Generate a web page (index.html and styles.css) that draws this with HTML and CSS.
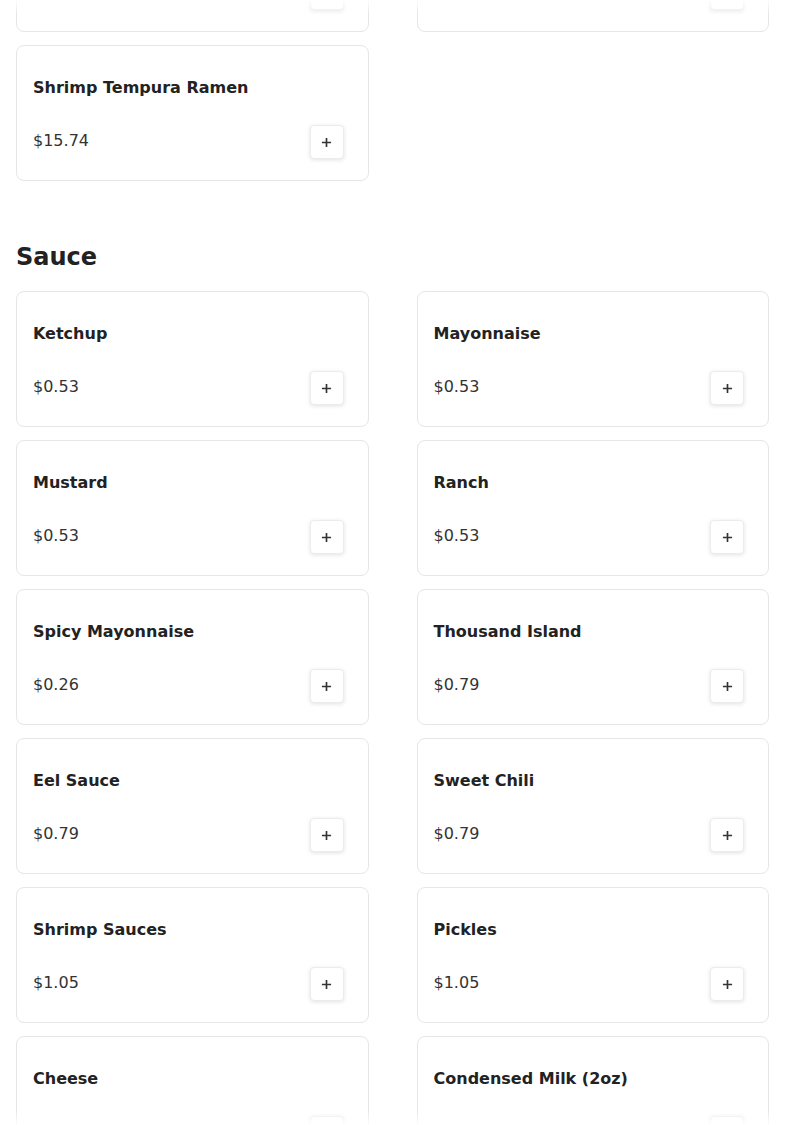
FILE: index.html
```html
<!DOCTYPE html>
<html>
<head>
<meta charset="utf-8">
<link rel="stylesheet" href="styles.css">
</head>
<body>
<main class="menu">
  <section class="section first">
    <div class="grid">
      <div class="card"><h3 class="name">Tonkotsu Ramen</h3><div class="row"><span class="price">$14.99</span><button class="add" aria-label="add"><svg viewBox="0 0 12 12"><path d="M6 1v10M1 6h10"/></svg></button></div></div>
      <div class="card"><h3 class="name">Miso Ramen</h3><div class="row"><span class="price">$13.99</span><button class="add" aria-label="add"><svg viewBox="0 0 12 12"><path d="M6 1v10M1 6h10"/></svg></button></div></div>
      <div class="card"><h3 class="name">Shrimp Tempura Ramen</h3><div class="row"><span class="price">$15.74</span><button class="add" aria-label="add"><svg viewBox="0 0 12 12"><path d="M6 1v10M1 6h10"/></svg></button></div></div>
    </div>
  </section>
  <section class="section">
    <h2 class="title">Sauce</h2>
    <div class="grid">
      <div class="card"><h3 class="name">Ketchup</h3><div class="row"><span class="price">$0.53</span><button class="add" aria-label="add"><svg viewBox="0 0 12 12"><path d="M6 1v10M1 6h10"/></svg></button></div></div>
      <div class="card"><h3 class="name">Mayonnaise</h3><div class="row"><span class="price">$0.53</span><button class="add" aria-label="add"><svg viewBox="0 0 12 12"><path d="M6 1v10M1 6h10"/></svg></button></div></div>
      <div class="card"><h3 class="name">Mustard</h3><div class="row"><span class="price">$0.53</span><button class="add" aria-label="add"><svg viewBox="0 0 12 12"><path d="M6 1v10M1 6h10"/></svg></button></div></div>
      <div class="card"><h3 class="name">Ranch</h3><div class="row"><span class="price">$0.53</span><button class="add" aria-label="add"><svg viewBox="0 0 12 12"><path d="M6 1v10M1 6h10"/></svg></button></div></div>
      <div class="card"><h3 class="name">Spicy Mayonnaise</h3><div class="row"><span class="price">$0.26</span><button class="add" aria-label="add"><svg viewBox="0 0 12 12"><path d="M6 1v10M1 6h10"/></svg></button></div></div>
      <div class="card"><h3 class="name">Thousand Island</h3><div class="row"><span class="price">$0.79</span><button class="add" aria-label="add"><svg viewBox="0 0 12 12"><path d="M6 1v10M1 6h10"/></svg></button></div></div>
      <div class="card"><h3 class="name">Eel Sauce</h3><div class="row"><span class="price">$0.79</span><button class="add" aria-label="add"><svg viewBox="0 0 12 12"><path d="M6 1v10M1 6h10"/></svg></button></div></div>
      <div class="card"><h3 class="name">Sweet Chili</h3><div class="row"><span class="price">$0.79</span><button class="add" aria-label="add"><svg viewBox="0 0 12 12"><path d="M6 1v10M1 6h10"/></svg></button></div></div>
      <div class="card"><h3 class="name">Shrimp Sauces</h3><div class="row"><span class="price">$1.05</span><button class="add" aria-label="add"><svg viewBox="0 0 12 12"><path d="M6 1v10M1 6h10"/></svg></button></div></div>
      <div class="card"><h3 class="name">Pickles</h3><div class="row"><span class="price">$1.05</span><button class="add" aria-label="add"><svg viewBox="0 0 12 12"><path d="M6 1v10M1 6h10"/></svg></button></div></div>
      <div class="card"><h3 class="name">Cheese</h3><div class="row"><span class="price">$1.05</span><button class="add" aria-label="add"><svg viewBox="0 0 12 12"><path d="M6 1v10M1 6h10"/></svg></button></div></div>
      <div class="card"><h3 class="name">Condensed Milk (2oz)</h3><div class="row"><span class="price">$1.05</span><button class="add" aria-label="add"><svg viewBox="0 0 12 12"><path d="M6 1v10M1 6h10"/></svg></button></div></div>
    </div>
  </section>
</main>
<div class="fade fade-top"></div>
<div class="fade fade-bottom"></div>
</body>
</html>
```
FILE: styles.css
```css
html, body {
  margin: 0;
  padding: 0;
  background: #ffffff;
  font-family: "DejaVu Sans", "Liberation Sans", sans-serif;
  color: #222222;
  overflow: hidden;
}
.menu {
  padding: 0 16px;
}
.section.first {
  margin-top: -104px;
}
.section + .section {
  margin-top: 60px;
}
.title {
  margin: 0 0 18px 0;
  font-size: 24px;
  line-height: 32px;
  font-weight: 700;
  color: #222222;
}
.grid {
  display: grid;
  grid-template-columns: 1fr 1fr;
  column-gap: 48px;
  row-gap: 13px;
}
.card {
  box-sizing: border-box;
  height: 136px;
  border: 1px solid #e6e6e6;
  border-radius: 8px;
  padding: 30px 24px 0 16px;
  background: #ffffff;
}
.name {
  margin: 0;
  font-size: 16px;
  line-height: 24px;
  font-weight: 700;
  color: #222222;
}
.row {
  margin-top: 25px;
  display: flex;
  align-items: center;
  justify-content: space-between;
  height: 34px;
}
.price {
  font-size: 16px;
  line-height: 24px;
  color: #333333;
  margin-top: -2px;
}
.add {
  box-sizing: border-box;
  width: 34px;
  height: 34px;
  padding: 0;
  border: 1px solid #ececec;
  border-radius: 4px;
  background: #ffffff;
  box-shadow: 0 1px 4px rgba(0, 0, 0, 0.12);
  display: flex;
  align-items: center;
  justify-content: center;
}
.add svg {
  width: 11px;
  height: 11px;
  stroke: #333333;
  stroke-width: 1.8;
  fill: none;
}
.fade {
  position: fixed;
  left: 0;
  right: 0;
  height: 14px;
  pointer-events: none;
}
.fade-top {
  top: 0;
  background: linear-gradient(to bottom, rgba(255,255,255,0.95), rgba(255,255,255,0));
}
.fade-bottom {
  bottom: 0;
  background: linear-gradient(to top, rgba(255,255,255,0.95), rgba(255,255,255,0));
}
```
